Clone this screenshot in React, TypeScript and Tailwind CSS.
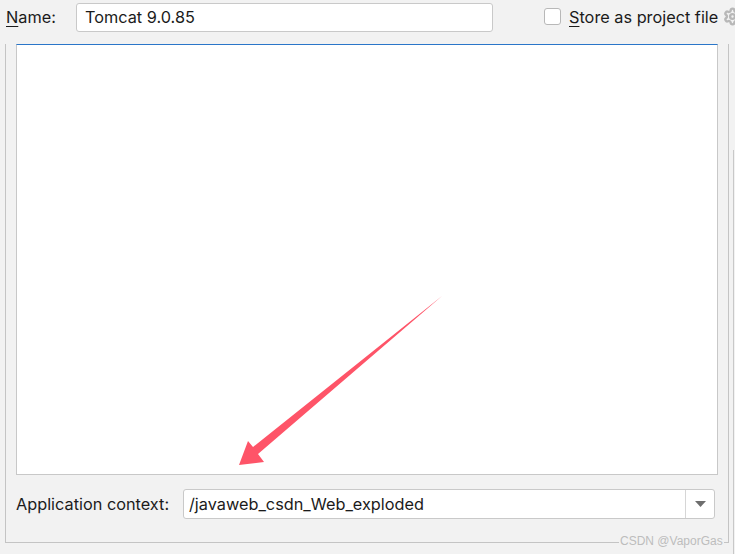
import React from "react";
import { Settings } from "lucide-react";

export default function App() {
  return (
    <div
      className="relative w-[735px] h-[554px] overflow-hidden bg-[#f2f2f2] text-[16.3px] text-[#1b1b1b]"
      style={{ fontFamily: "Inter, 'Noto Sans', sans-serif" }}
    >
      {/* top row */}
      <div className="h-[35px] flex items-center pl-[6px] overflow-hidden">
        <div className="w-[70px] leading-none shrink-0">
          <span className="underline underline-offset-[3px] decoration-1">N</span>ame:
        </div>
        <div className="w-[417px] h-[29px] bg-white border border-[#c9c9c9] rounded-[3px] flex items-center pl-[8px] leading-none shrink-0">
          Tomcat 9.0.85
        </div>
        <div className="ml-[51px] w-[17px] h-[17px] bg-white border border-[#b8b8b8] rounded-[3px] -mt-[3px] shrink-0" />
        <div className="ml-[8px] leading-none whitespace-nowrap shrink-0">
          <span className="underline underline-offset-[3px] decoration-1">S</span>tore as project file
        </div>
        <div className="ml-[5px] shrink-0 text-[#b8b8b8] -mt-[2px]">
          <Settings size={19} strokeWidth={3} />
        </div>
      </div>

      {/* group box */}
      <div className="mt-[9px] flex">
        <div className="ml-[5px] w-[724px] h-[499px] border-l border-r border-b border-[#c4c4c4] px-[10px] flex flex-col shrink-0">
          <div className="h-[431px] bg-white border-t border-t-[#2a76c9] border-l border-r border-b border-l-[#c8c8c8] border-r-[#c8c8c8] border-b-[#c8c8c8]" />
          <div className="mt-[14px] h-[30px] flex items-center">
            <div className="w-[167px] leading-none shrink-0">Application context:</div>
            <div className="w-[532px] h-[30px] bg-white border border-[#c9c9c9] rounded-[3px] flex shrink-0">
              <div className="flex-1 flex items-center pl-[5px] leading-none">/javaweb_csdn_Web_exploded</div>
              <div className="w-[29px] border-l border-[#d6d6d6] flex items-center justify-center">
                <svg width="11" height="6" viewBox="0 0 11 6">
                  <polygon points="0,0 11,0 5.5,6" fill="#6e6e6e" />
                </svg>
              </div>
            </div>
          </div>
        </div>
        <div className="ml-[4px] mt-[106px] w-px h-[410px] bg-[#c8c8c8] shrink-0" />
      </div>

      {/* watermark */}
      <div
        className="absolute left-[619px] top-[534px] px-[1px] bg-[#f2f2f2] text-[12px] leading-[14px] text-[#bdbdbd]"
        style={{ fontFamily: "'Liberation Sans', Arial, sans-serif" }}
      >
        CSDN @VaporGas
      </div>

      {/* annotation arrow */}
      <svg className="absolute left-0 top-0 pointer-events-none" width="735" height="554">
        <polygon
          points="442,296 258,454 264,462 239,465 248,441 253,447"
          fill="#fe5468"
        />
      </svg>
    </div>
  );
}
